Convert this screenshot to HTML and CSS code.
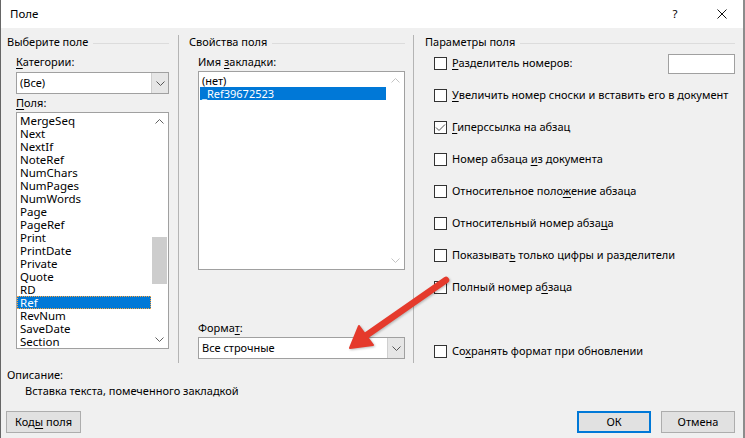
FILE: index.html
```html
<!DOCTYPE html>
<html lang="ru">
<head>
<meta charset="utf-8">
<title>Поле</title>
<link rel="stylesheet" href="styles.css">
</head>
<body>
<div class="window">
  <div class="titlebar">
    <span class="title">Поле</span>
    <span class="tb-help">?</span>
    <span class="tb-close"><svg width="10" height="10" viewBox="0 0 10 10"><path d="M0.5 0.5 L9.5 9.5 M9.5 0.5 L0.5 9.5" stroke="#111" stroke-width="1" fill="none"/></svg></span>
  </div>
  <div class="content">
    <div class="columns">
      <section class="col col-left">
        <div class="grp-head"><span>Выберите поле</span><i class="rule"></i></div>
        <div class="label"><u>К</u>атегории:</div>
        <div class="combo">
          <span class="combo-text">(Все)</span>
          <span class="combo-btn"><svg width="9" height="5" viewBox="0 0 9 5"><path d="M0.5 0.5 L4.5 4.5 L8.5 0.5" stroke="#555" fill="none"/></svg></span>
        </div>
        <div class="label label-tight"><u>П</u>оля:</div>
        <div class="listbox fields">
          <ul class="items">
            <li>MergeSeq</li>
            <li>Next</li>
            <li>NextIf</li>
            <li>NoteRef</li>
            <li>NumChars</li>
            <li>NumPages</li>
            <li>NumWords</li>
            <li>Page</li>
            <li>PageRef</li>
            <li>Print</li>
            <li>PrintDate</li>
            <li>Private</li>
            <li>Quote</li>
            <li>RD</li>
            <li class="sel focus">Ref</li>
            <li>RevNum</li>
            <li>SaveDate</li>
            <li>Section</li>
          </ul>
          <div class="vscroll">
            <span class="sarrow"><svg width="9" height="5" viewBox="0 0 9 5"><path d="M0.5 4.5 L4.5 0.5 L8.5 4.5" stroke="#606060" fill="none"/></svg></span>
            <div class="track"><div class="thumb"></div></div>
            <span class="sarrow"><svg width="9" height="5" viewBox="0 0 9 5"><path d="M0.5 0.5 L4.5 4.5 L8.5 0.5" stroke="#606060" fill="none"/></svg></span>
          </div>
        </div>
      </section>

      <section class="col col-mid">
        <div class="grp-head"><span>Свойства поля</span><i class="rule"></i></div>
        <div class="label">Имя <u>з</u>акладки:</div>
        <div class="listbox bookmarks">
          <ul class="items">
            <li>(нет)</li>
            <li class="sel">_Ref39672523</li>
          </ul>
          <div class="vscroll disabled">
            <span class="sarrow"><svg width="9" height="5" viewBox="0 0 9 5"><path d="M0.5 4.5 L4.5 0.5 L8.5 4.5" stroke="#c4c4c4" fill="none"/></svg></span>
            <div class="track"></div>
            <span class="sarrow"><svg width="9" height="5" viewBox="0 0 9 5"><path d="M0.5 0.5 L4.5 4.5 L8.5 0.5" stroke="#c4c4c4" fill="none"/></svg></span>
          </div>
        </div>
        <div class="label label-format">Форма<u>т</u>:</div>
        <div class="combo combo-format">
          <span class="combo-text">Все строчные</span>
          <span class="combo-btn"><svg width="9" height="5" viewBox="0 0 9 5"><path d="M0.5 0.5 L4.5 4.5 L8.5 0.5" stroke="#555" fill="none"/></svg></span>
        </div>
      </section>

      <section class="col col-right">
        <div class="grp-head"><span>Параметры поля</span><i class="rule"></i></div>
        <div class="opts">
          <div class="opt">
            <span class="cb"></span><span class="opt-text"><u>Р</u>азделитель номеров:</span>
            <span class="textbox"></span>
          </div>
          <div class="opt"><span class="cb"></span><span class="opt-text"><u>У</u>величить номер сноски и вставить его в документ</span></div>
          <div class="opt"><span class="cb checked"><svg width="11" height="11" viewBox="0 0 11 11"><path d="M1 5.5 L4 8.5 L10 2.5" stroke="#505050" stroke-width="1" fill="none"/></svg></span><span class="opt-text"><u>Г</u>иперссылка на абзац</span></div>
          <div class="opt"><span class="cb"></span><span class="opt-text">Номер абзаца <u>и</u>з документа</span></div>
          <div class="opt"><span class="cb"></span><span class="opt-text">Относительное поло<u>ж</u>ение абзаца</span></div>
          <div class="opt"><span class="cb"></span><span class="opt-text">Относительный номер абза<u>ц</u>а</span></div>
          <div class="opt"><span class="cb"></span><span class="opt-text">Показыват<u>ь</u> только цифры и разделители</span></div>
          <div class="opt"><span class="cb"></span><span class="opt-text">Полный номер а<u>б</u>заца</span></div>
          <div class="opt opt-empty"></div>
          <div class="opt"><span class="cb"></span><span class="opt-text">Со<u>х</u>ранять формат при обновлении</span></div>
        </div>
      </section>
    </div>

    <div class="desc-label">Описание:</div>
    <div class="desc-text">Вставка текста, помеченного закладкой</div>

    <div class="buttons">
      <button class="btn">Код<u>ы</u> поля</button>
      <span class="btn-spacer"></span>
      <button class="btn btn-default">ОК</button>
      <button class="btn">Отмена</button>
    </div>
  </div>

  <svg class="annot-arrow" width="745" height="438" viewBox="0 0 745 438">
    <line x1="446" y1="280" x2="364" y2="337" stroke="#e53a2c" stroke-width="6.5" stroke-linecap="round"/>
    <polygon points="350,348 359,326 373,345" fill="#e53a2c" stroke="#e53a2c" stroke-width="2" stroke-linejoin="round"/>
  </svg>
</div>
</body>
</html>
```

FILE: styles.css
```css
* { box-sizing: border-box; }

html, body {
  margin: 0;
  padding: 0;
}

body {
  width: 745px;
  height: 438px;
  overflow: hidden;
  background: #f0f0f0;
  font-family: "Segoe UI", "Noto Sans", "Open Sans", sans-serif;
  font-size: 11px;
  color: #000;
}

.window {
  position: relative;
  width: 745px;
  height: 438px;
  border-left: 1px solid #666;
  border-right: 2px solid #8c8c8c;
  background: #f0f0f0;
  display: flex;
  flex-direction: column;
}

u { text-decoration: underline; text-underline-offset: 2px; }

/* title bar */
.titlebar {
  height: 28px;
  background: #fff;
  display: flex;
  align-items: center;
  padding-left: 9px;
  flex: none;
}
.title { flex: 1; font-size: 11.5px; line-height: 14px; }
.tb-help { width: 12px; text-align: center; margin-right: 36px; line-height: 14px; font-size: 11.5px; }
.tb-close { width: 10px; height: 10px; margin-right: 16px; display: flex; }

/* content */
.content {
  flex: 1;
  display: flex;
  flex-direction: column;
  padding-top: 7px;
}

.columns {
  display: flex;
  height: 328px;
}

.col {
  display: flex;
  flex-direction: column;
  min-width: 0;
}
.col-left { flex: none; width: 177px; padding: 0 9px 0 6px; }
.col-mid { flex: none; width: 235px; border-left: 1px solid #b4b4b4; padding: 0 8px 4px 10px; }
.col-right { flex: 1 1 0; border-left: 1px solid #b4b4b4; padding: 0 8px 0 11px; }

.grp-head {
  display: flex;
  align-items: center;
  height: 14px;
  line-height: 14px;
}
.grp-head span { white-space: nowrap; }
.grp-head .rule {
  flex: 1;
  height: 1px;
  background: #dcdcdc;
  margin-left: 5px;
  margin-top: 2px;
}

.label {
  line-height: 14px;
  margin: 6px 0 3px 9px;
}
.label-tight { margin-top: 2px; margin-bottom: 2px; }
.col-mid .label { margin-bottom: 2px; }
.col-mid .label-format { margin-top: auto; margin-bottom: 2px; }

/* combo */
.combo {
  margin-left: 9px;
  height: 22px;
  border: 1px solid #a0a0a0;
  background: #fff;
  display: flex;
  align-items: stretch;
}
.combo-text { flex: 1; padding-left: 3px; line-height: 20px; }
.combo-btn {
  width: 17px;
  background: #e6e6e6;
  border-left: 1px solid #cfcfcf;
  display: flex;
  align-items: center;
  justify-content: center;
}
.combo-format { width: 207px; }

/* listbox */
.listbox {
  margin-left: 9px;
  border: 1px solid #a0a0a0;
  background: #fff;
  display: flex;
}
.fields { height: 237px; }
.bookmarks { height: 199px; width: 207px; }

.items {
  list-style: none;
  margin: 0;
  padding: 0;
  flex: 1;
  min-width: 0;
}
.items li {
  height: 13px;
  line-height: 13px;
  padding-left: 3px;
  white-space: nowrap;
}
.fields .items { padding-top: 1px; font-size: 11.5px; }
.bookmarks .items { padding-top: 2px; padding-right: 1px; }
.bookmarks .items li { margin-left: 1px; padding-left: 2px; }
.items li.sel { background: #0078d7; color: #fff; }
.items li.focus { outline: 1px dotted #ffa640; outline-offset: -1px; }

.vscroll {
  width: 17px;
  flex: none;
  display: flex;
  flex-direction: column;
  background: #fff;
}
.sarrow {
  height: 17px;
  display: flex;
  align-items: center;
  justify-content: center;
  flex: none;
}
.track { flex: 1; padding: 0 1px; }
.thumb {
  margin-top: 107px;
  height: 47px;
  background: #cdcdcd;
}

/* right options */
.opts {
  display: flex;
  flex-direction: column;
  gap: 14px;
  margin-top: 5px;
  margin-left: 9px;
}
.opt {
  height: 18px;
  display: flex;
  align-items: center;
}
.cb {
  width: 13px;
  height: 13px;
  border: 1px solid #333;
  background: #fff;
  flex: none;
  display: flex;
  align-items: center;
  justify-content: center;
}
.opt-text { margin-left: 5px; flex: 1; white-space: nowrap; line-height: 14px; }
.textbox {
  width: 67px;
  flex: none;
  height: 20px;
  border: 1px solid #a0a0a0;
  background: #fff;
  margin-top: 2px;
}

/* description */
.desc-label { line-height: 14px; margin: 5px 0 0 6px; }
.desc-text { line-height: 14px; margin: 2px 0 0 24px; }

/* buttons */
.buttons {
  display: flex;
  margin-top: 13px;
  padding: 0 8px 0 5px;
  gap: 10px;
}
.btn-spacer { flex: 1; }
.btn {
  height: 22px;
  width: 75px;
  font: inherit;
  color: #000;
  background: #e1e1e1;
  border: 1px solid #adadad;
  padding: 0;
  line-height: 18px;
}
.btn-default { border: 2px solid #0078d7; width: 74px; }
.buttons .btn:last-child { width: 74px; }

/* annotation arrow overlay */
.annot-arrow {
  position: absolute;
  left: -1px;
  top: 0;
  pointer-events: none;
  filter: drop-shadow(1px 1px 1px rgba(0,0,0,0.25));
}
```
